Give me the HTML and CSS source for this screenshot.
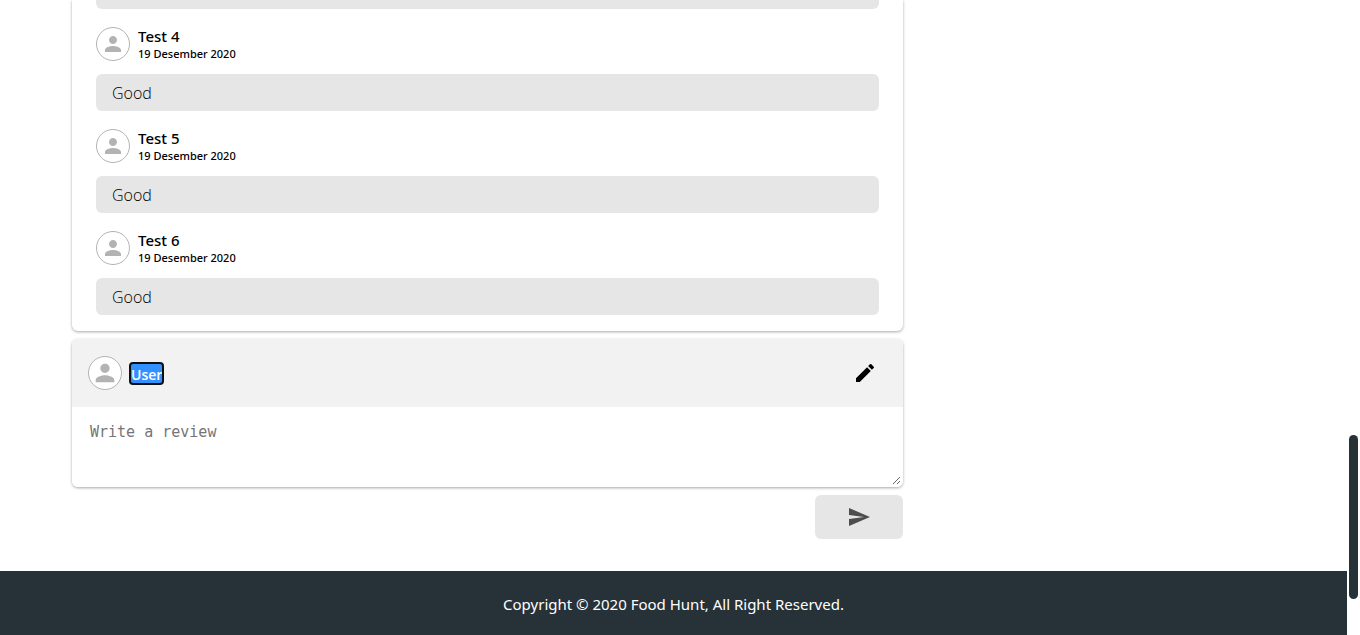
FILE: index.html
```html
<!DOCTYPE html>
<html lang="en">
<head>
<meta charset="utf-8">
<meta name="viewport" content="width=device-width, initial-scale=1">
<title>Food Hunt</title>
<link rel="stylesheet" href="styles.css">
</head>
<body>
<svg class="sprite" aria-hidden="true">
  <symbol id="person" viewBox="0 0 24 24"><path d="M12 12c2.210 0 4-1.790 4-4s-1.790-4-4-4-4 1.790-4 4 1.790 4 4 4zm0 2c-2.670 0-8 1.340-8 4v2h16v-2c0-2.660-5.330-4-8-4z"/></symbol>
</svg>
<div class="page">
  <main class="content">
    <div class="column">
      <section class="card reviews" aria-label="Reviews">
        <div class="bubble bubble-end"></div>
        <article class="review">
          <header class="author">
            <span class="avatar"><svg><use href="#person"/></svg></span>
            <div><h3 class="name">Test 4</h3><p class="date">19 Desember 2020</p></div>
          </header>
          <p class="bubble">Good</p>
        </article>
        <article class="review">
          <header class="author">
            <span class="avatar"><svg><use href="#person"/></svg></span>
            <div><h3 class="name">Test 5</h3><p class="date">19 Desember 2020</p></div>
          </header>
          <p class="bubble">Good</p>
        </article>
        <article class="review">
          <header class="author">
            <span class="avatar"><svg><use href="#person"/></svg></span>
            <div><h3 class="name">Test 6</h3><p class="date">19 Desember 2020</p></div>
          </header>
          <p class="bubble">Good</p>
        </article>
      </section>
      <form class="form">
        <div class="card editor">
          <div class="editor-head">
            <span class="avatar avatar-user"><svg><use href="#person"/></svg></span>
            <input class="user" type="text" value="User" aria-label="Name">
            <button class="edit" type="button" aria-label="Edit name">
              <svg viewBox="0 0 24 24"><path d="M3 17.250V21h3.750L17.810 9.940l-3.750-3.750L3 17.250zM20.710 7.040a1 1 0 0 0 0-1.410l-2.340-2.340a1 1 0 0 0-1.410 0l-1.830 1.830 3.750 3.750 1.830-1.830z"/></svg>
            </button>
          </div>
          <textarea class="text" placeholder="Write a review" aria-label="Review"></textarea>
        </div>
        <button class="send" type="button" aria-label="Send">
          <svg viewBox="0 0 24 24"><path d="M2.010 21L23 12 2.010 3 2 10l15 2-15 2z"/></svg>
        </button>
      </form>
    </div>
  </main>
  <footer class="footer">Copyright © 2020 Food Hunt, All Right Reserved.</footer>
</div>
<div class="rail"><div class="thumb"></div></div>
</body>
</html>
```
FILE: styles.css
```css
* { box-sizing: border-box; }
body {
  margin: 0;
  min-height: 100vh;
  display: grid;
  grid-template-columns: minmax(0, 1fr) 13px;
  font-family: "Segoe UI", "Noto Sans", "Open Sans", sans-serif;
  font-size: 15px;
  line-height: 21px;
  color: #000;
  background: #fff;
}
h3, p { margin: 0; }
svg { display: block; fill: currentColor; }
.sprite { position: absolute; width: 0; height: 0; }
.page { display: flex; flex-direction: column; }
.content {
  flex: 1;
  display: grid;
  grid-template-columns: minmax(0, 1fr) 340px;
  column-gap: 32px;
  padding: 0 72px 32px;
}
.card {
  background: #fff;
  border-radius: 6px;
  box-shadow: 0 1px 3px rgba(0, 0, 0, .35);
}
.reviews {
  padding: 0 24px 16px;
  border-radius: 0 0 6px 6px;
}
.review { padding-top: 18px; }
.author {
  display: flex;
  align-items: center;
  gap: 8px;
  height: 34px;
  margin-bottom: 13px;
}
.avatar {
  flex: none;
  display: grid;
  place-items: center;
  width: 34px;
  height: 34px;
  border: 1px solid #b3b3b3;
  border-radius: 50%;
  background: #fff;
  color: #b3b3b3;
}
.avatar svg { width: 24px; height: 24px; }
.avatar-user svg { width: 28px; height: 28px; }
.name { font-size: 15px; line-height: 20px; font-weight: 500; }
.date { font-size: 11px; line-height: 16px; font-weight: 500; }
.bubble {
  padding: 9px 16px 7px;
  border-radius: 6px;
  background: #e6e6e6;
  font-family: "Segoe UI", "Open Sans", "Noto Sans", sans-serif;
  font-weight: 300;
  font-size: 16px;
}
.bubble-end { height: 9px; padding: 0; border-radius: 0 0 6px 6px; }
.form {
  display: flex;
  flex-direction: column;
  gap: 8px;
  margin-top: 8px;
}
.editor { overflow: hidden; }
.editor-head {
  display: flex;
  align-items: center;
  height: 68px;
  padding: 0 24px 0 16px;
  background: #f2f2f2;
}
.user {
  width: 35px;
  height: 23px;
  margin-left: 7px;
  padding: 2px 0 0;
  border: 2px solid #101010;
  border-radius: 4px;
  outline: 0;
  background: #3390ff;
  color: #fff;
  font: 600 14px/17px "Segoe UI", "Open Sans", "Noto Sans", sans-serif;
}
.edit {
  margin-left: auto;
  padding: 0 2px;
  border: 0;
  background: none;
  color: #000;
}
.edit svg { width: 24px; height: 24px; }
.text {
  display: block;
  width: 100%;
  height: 80px;
  padding: 14px 16px;
  border: 2px solid transparent;
  outline: 0;
  resize: vertical;
  font: 15px/18px Consolas, "DejaVu Sans Mono", "Liberation Mono", monospace;
}
.text::placeholder { color: #757575; }
.send {
  align-self: flex-end;
  display: grid;
  place-items: center;
  width: 88px;
  height: 44px;
  padding: 0;
  border: 0;
  border-radius: 6px;
  background: #e6e6e6;
  color: #4d4d4d;
}
.send svg { width: 24px; height: 24px; }
.footer {
  padding: 23px 16px 20px;
  background: #263238;
  color: #fff;
  text-align: center;
}
.rail {
  display: flex;
  flex-direction: column;
  justify-content: flex-end;
  padding: 0 2px 36px;
}
.thumb { height: 164px; border-radius: 5px; background: #263238; }
```
